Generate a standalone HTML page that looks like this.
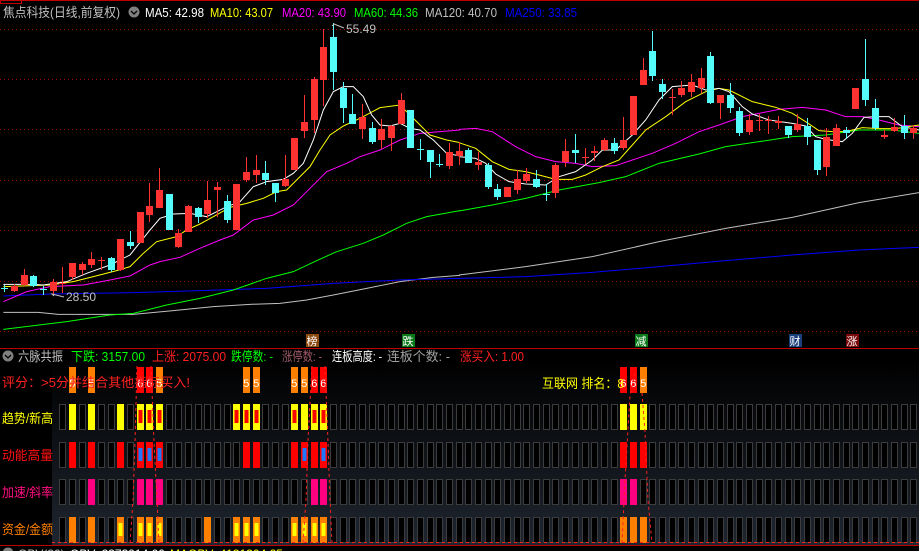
<!DOCTYPE html>
<html><head><meta charset="utf-8">
<style>
html,body{margin:0;padding:0;background:#000;width:919px;height:551px;overflow:hidden}
svg{display:block}
text{font-family:"Liberation Sans","Noto Sans CJK SC",sans-serif}
</style></head><body>
<svg id="s" width="919" height="551" xmlns="http://www.w3.org/2000/svg">
<defs>
<linearGradient id="bg" x1="0" y1="0" x2="0" y2="1">
<stop offset="0" stop-color="#000"/><stop offset="1" stop-color="#1f2630"/>
</linearGradient>
</defs>
<rect width="919" height="551" fill="#000"/>
<rect x="52" y="360" width="867" height="185" fill="url(#bg)"/>
<line x1="0" y1="0.5" x2="919" y2="0.5" stroke="#c00000"/>
<rect x="0.5" y="0.5" width="21" height="3" fill="none" stroke="#c00000"/>
<g stroke="#a00000" stroke-dasharray="1,3" stroke-width="1">
<line x1="0" y1="29.5" x2="919" y2="29.5"/><line x1="0" y1="79.5" x2="919" y2="79.5"/>
<line x1="0" y1="129.5" x2="919" y2="129.5"/><line x1="0" y1="180.5" x2="919" y2="180.5"/>
<line x1="0" y1="230.5" x2="919" y2="230.5"/><line x1="0" y1="281.5" x2="919" y2="281.5"/>
<line x1="0" y1="331.5" x2="919" y2="331.5"/>
</g>
<g id="ma" fill="none" stroke-width="1">
<g transform="translate(0,20) scale(0.33333)">
<polyline vector-effect="non-scaling-stroke" stroke="#c0c0c0" points="10,877 115,877 175,883 400,883 520,872 640,860 750,853 840,850 920,840 1000,825 1100,805 1200,785 1300,772 1380,766"/>
<polyline vector-effect="non-scaling-stroke" stroke="#0000ff" points="10,828 150,822 400,818 600,812 800,805 1000,790 1200,780 1380,775"/>
<polyline vector-effect="non-scaling-stroke" stroke="#00ff00" points="10,928 200,905 330,885 400,880 500,855 600,835 700,810 800,775 880,755 950,722 1010,695 1090,670 1150,645 1220,610 1280,590 1380,572"/>
<polyline vector-effect="non-scaling-stroke" stroke="#ff00ff" points="10,845 80,815 150,800 250,795 330,780 390,768 450,735 480,725 540,712 600,685 660,660 700,645 760,600 820,585 880,555 930,505 980,455 1040,430 1080,410 1140,390 1200,360 1260,340 1320,335 1380,330"/>
<polyline vector-effect="non-scaling-stroke" stroke="#ffff00" points="10,800 150,795 220,785 280,770 350,752 390,740 430,700 470,665 530,650 560,630 600,612 640,590 690,562 740,550 790,535 830,515 860,510 890,480 930,440 960,390 990,345 1030,318 1080,295 1140,263 1200,255 1250,305 1290,345 1340,360 1380,368"/>
<polyline vector-effect="non-scaling-stroke" stroke="#ffffff" points="10,793 100,793 130,795 200,785 260,760 330,735 390,705 450,630 480,595 520,582 570,580 620,590 680,560 720,545 760,500 800,485 850,478 880,460 910,430 940,360 970,270 1000,215 1030,200 1060,200 1090,230 1115,285 1140,315 1170,318 1200,310 1230,325 1260,330 1300,360 1340,400 1380,408"/>
</g>
<g transform="translate(459,20) scale(0.33333)">
<polyline vector-effect="non-scaling-stroke" stroke="#c0c0c0" points="0,765 200,740 400,710 600,665 800,625 1000,592 1200,548 1380,518"/>
<polyline vector-effect="non-scaling-stroke" stroke="#0000ff" points="0,775 200,770 400,757 600,740 800,722 1000,705 1200,690 1380,682"/>
<polyline vector-effect="non-scaling-stroke" stroke="#00ff00" points="0,573 100,555 200,535 300,510 420,488 500,470 600,430 720,402 800,380 900,365 1000,350 1100,345 1200,330 1300,330 1380,340"/>
<polyline vector-effect="non-scaling-stroke" stroke="#ff00ff" points="0,328 50,325 100,335 170,380 230,410 290,425 350,430 400,440 470,437 520,420 580,400 650,370 720,335 780,315 850,290 900,280 960,268 1030,262 1100,270 1160,290 1210,290 1260,300 1320,315 1380,320"/>
<polyline vector-effect="non-scaling-stroke" stroke="#ffff00" points="0,368 50,385 100,425 150,448 200,455 240,465 290,478 340,478 380,465 430,440 480,420 520,375 560,330 620,290 680,245 740,215 780,205 810,210 880,245 950,262 1000,280 1040,305 1080,332 1120,335 1160,335 1210,323 1260,326 1310,326 1380,315"/>
<polyline vector-effect="non-scaling-stroke" stroke="#ffffff" points="0,410 50,415 80,430 110,462 150,485 200,492 260,495 300,470 350,455 400,420 430,390 470,390 520,345 560,300 600,240 640,200 700,195 740,210 780,205 810,215 850,260 880,282 930,300 1000,310 1040,318 1070,350 1100,358 1150,365 1180,340 1215,292 1250,290 1290,290 1330,320 1380,330"/>
</g>
</g>
<g id="candles"></g>
<text x="346" y="33" font-size="12" fill="#c0c0c0">55.49</text>
<polyline points="332,26 334,24 344,28" fill="none" stroke="#c0c0c0"/>
<text x="66" y="301" font-size="12" fill="#c0c0c0">28.50</text>
<polyline points="54,296 52,294 64,297" fill="none" stroke="#c0c0c0"/>

<g font-size="13">
<text x="3" y="17" fill="#c0c0c0" textLength="117" lengthAdjust="spacingAndGlyphs">焦点科技(日线,前复权)</text>
<text x="145" y="17" fill="#fff" textLength="59" lengthAdjust="spacingAndGlyphs">MA5: 42.98</text>
<text x="210" y="17" fill="#ffff00" textLength="63" lengthAdjust="spacingAndGlyphs">MA10: 43.07</text>
<text x="282" y="17" fill="#ff00ff" textLength="64" lengthAdjust="spacingAndGlyphs">MA20: 43.90</text>
<text x="354" y="17" fill="#00ff00" textLength="64" lengthAdjust="spacingAndGlyphs">MA60: 44.36</text>
<text x="425" y="17" fill="#c0c0c0" textLength="72" lengthAdjust="spacingAndGlyphs">MA120: 40.70</text>
<text x="505" y="17" fill="#0000ff" textLength="72" lengthAdjust="spacingAndGlyphs">MA250: 33.85</text>
</g>
<circle cx="134" cy="12" r="5.5" fill="#808080"/>
<polyline points="131,11 134,14 137,11" fill="none" stroke="#000" stroke-width="1.3"/>

<g font-size="11" fill="#fff">
<rect x="306" y="334" width="13" height="13" fill="#8b4a10"/><text x="306.5" y="345">榜</text>
<rect x="402" y="334" width="13" height="13" fill="#0a7a1a"/><text x="402.5" y="345">跌</text>
<rect x="635" y="334" width="13" height="13" fill="#0a7a1a"/><text x="635.5" y="345">减</text>
<rect x="789" y="334" width="13" height="13" fill="#1a3f7a"/><text x="789.5" y="345">财</text>
<rect x="846" y="334" width="13" height="13" fill="#7a0a0a"/><text x="846.5" y="345">涨</text>
</g>
<line x1="0" y1="348.5" x2="919" y2="348.5" stroke="#c00000"/>

<circle cx="8" cy="356" r="5.5" fill="#808080"/>
<polyline points="5,355 8,358 11,355" fill="none" stroke="#000" stroke-width="1.3"/>
<g font-size="13">
<text x="18" y="361" fill="#c0c0c0" textLength="45" lengthAdjust="spacingAndGlyphs">六脉共振</text>
<text x="71" y="361" fill="#00ff00" textLength="74" lengthAdjust="spacingAndGlyphs">下跌: 3157.00</text>
<text x="152" y="361" fill="#ff2020" textLength="74" lengthAdjust="spacingAndGlyphs">上涨: 2075.00</text>
<text x="231" y="361" fill="#00ff00" textLength="42" lengthAdjust="spacingAndGlyphs">跌停数: -</text>
<text x="282" y="361" fill="#a05a6a" textLength="40" lengthAdjust="spacingAndGlyphs">涨停数: -</text>
<text x="332" y="361" fill="#fff" textLength="50" lengthAdjust="spacingAndGlyphs">连板高度: -</text>
<text x="387" y="361" fill="#a0a0a0" textLength="63" lengthAdjust="spacingAndGlyphs">连板个数: -</text>
<text x="460" y="361" fill="#ff2020" textLength="64" lengthAdjust="spacingAndGlyphs">涨买入: 1.00</text>
</g>

<g id="grid"></g>
<g id="score"></g>
<text x="2" y="387" font-size="13" fill="#ff2020" textLength="188" lengthAdjust="spacingAndGlyphs">评分：&gt;5分并结合其他指标买入!</text>
<text x="542" y="388" font-size="13" fill="#ffff00" textLength="82" lengthAdjust="spacingAndGlyphs">互联网 排名：8</text>

<g font-size="13">
<text x="2" y="423" fill="#ffff00" textLength="51" lengthAdjust="spacingAndGlyphs">趋势/新高</text>
<text x="2" y="460" fill="#ff1010" textLength="51" lengthAdjust="spacingAndGlyphs">动能高量</text>
<text x="2" y="497" fill="#ff1080" textLength="51" lengthAdjust="spacingAndGlyphs">加速/斜率</text>
<text x="2" y="534" fill="#ff8000" textLength="51" lengthAdjust="spacingAndGlyphs">资金/金额</text>
</g>
<g fill="none" stroke="#ff2020" stroke-dasharray="3,3">
<polyline points="137,366 135,442 133,500 130,543"/>
<polyline points="151,366 154,442 157,500 159,543"/>
<polyline points="312,366 308,440 306,500 303,543"/>
<polyline points="325,366 328,442 330,500 332,543"/>
<polyline points="635,373 630,395 625,480 622,543"/>
<polyline points="642,393 645,432 648,500 652,543"/>
<line x1="52" y1="542.5" x2="919" y2="542.5"/>
</g>
<line x1="0" y1="545.5" x2="919" y2="545.5" stroke="#c00000"/>
<g font-size="12">
<circle cx="8" cy="553" r="5.5" fill="#808080"/>
<text x="18" y="558" fill="#c0c0c0">OBV(30)</text>
<text x="70" y="558" fill="#fff">OBV: 2373914.00</text>
<text x="170" y="558" fill="#ffff00">MAOBV: 4131304.25</text>
</g>
</svg>
<script>
var NS="http://www.w3.org/2000/svg";
function el(p,t,a){var e=document.createElementNS(NS,t);for(var k in a)e.setAttribute(k,a[k]);p.appendChild(e);return e;}
var D=[[0,288,288,285,292,'c'],[1,286,291,284,292,'r'],[2,275,285,269,286,'r'],[3,276,286,275,287,'c'],[4,289,289,286,295,'c'],[5,282,291,279,295,'r'],[6,283,283,267,293,'r'],[7,263,277,263,280,'r'],[8,264,270,262,275,'r'],[9,259,265,252,268,'r'],[10,260,260,257,270,'r'],[11,258,270,257,272,'c'],[12,239,270,239,271,'r'],[13,242,246,231,249,'c'],[14,212,243,212,243,'r'],[15,206,215,183,222,'r'],[16,190,208,168,208,'r'],[17,194,230,194,230,'c'],[18,233,247,229,248,'r'],[19,206,232,205,232,'r'],[20,208,217,207,223,'c'],[21,200,214,181,218,'r'],[22,187,190,182,217,'r'],[23,201,220,195,223,'c'],[24,184,230,184,230,'r'],[25,172,180,157,182,'r'],[26,170,175,155,183,'r'],[27,173,180,161,185,'c'],[28,183,193,183,202,'c'],[29,179,186,155,187,'r'],[30,138,170,138,170,'r'],[31,122,131,95,138,'r'],[32,79,120,77,133,'r'],[33,47,80,29,106,'r'],[34,37,72,23,90,'c'],[35,88,108,82,123,'c'],[36,114,124,94,124,'c'],[37,117,129,104,139,'r'],[38,128,142,122,144,'c'],[39,129,140,119,149,'r'],[40,126,138,125,151,'r'],[41,100,124,93,124,'r'],[42,110,148,110,148,'c'],[43,149,149,139,160,'c'],[44,150,162,150,178,'c'],[45,164,164,154,167,'c'],[46,152,166,143,169,'r'],[47,151,156,142,165,'r'],[48,150,163,148,163,'c'],[49,162,165,152,170,'r'],[50,165,187,163,189,'c'],[51,189,197,184,200,'c'],[52,187,197,187,197,'r'],[53,179,190,170,194,'r'],[54,174,181,168,183,'r'],[55,179,187,170,188,'c'],[56,194,194,184,201,'c'],[57,165,193,163,198,'r'],[58,151,162,139,167,'r'],[59,150,153,134,163,'c'],[60,157,157,148,164,'r'],[61,151,153,146,161,'r'],[62,140,150,138,151,'r'],[63,143,151,138,154,'c'],[64,140,148,117,150,'r'],[65,96,135,96,135,'r'],[66,70,85,58,85,'r'],[67,51,76,31,81,'c'],[68,84,92,79,99,'c'],[69,97,97,89,115,'r'],[70,88,95,81,97,'r'],[71,82,92,74,97,'r'],[72,78,88,68,93,'r'],[73,56,103,52,104,'c'],[74,95,103,95,119,'r'],[75,95,108,83,113,'c'],[76,111,133,107,136,'c'],[77,120,132,114,135,'r'],[78,120,120,114,131,'r'],[79,120,120,116,134,'r'],[80,121,123,116,129,'r'],[81,126,135,126,138,'c'],[82,124,130,114,132,'r'],[83,126,137,118,145,'c'],[84,140,170,140,175,'c'],[85,137,167,128,176,'r'],[86,128,146,124,146,'r'],[87,130,133,127,139,'c'],[88,88,109,88,109,'r'],[89,79,100,39,106,'c'],[90,108,128,99,130,'c'],[91,135,137,130,139,'r'],[92,127,131,118,132,'r'],[93,126,133,115,139,'c'],[94,128,133,125,139,'r'],[95,128,135,125,140,'c']];
function X(i){return 4.3+9.67*i;}
var cg=document.getElementById('candles');
D.forEach(function(d){var x=Math.round(X(d[0])),col=d[5]=='r'?'#ff3232':'#54fcfc';
el(cg,'rect',{x:x,y:d[3],width:1,height:d[4]-d[3],fill:col});
var h=Math.max(1,d[2]-d[1]);el(cg,'rect',{x:x-3,y:d[1],width:7,height:h,fill:col});});
var rows=[404,442,479,517],H=26;
var fill={0:{7:'y',9:'y',12:'y',14:'yr',15:'yr',16:'yr',24:'yr',25:'yr',26:'yr',30:'yr',31:'y',32:'yr',33:'yr',64:'y',65:'y',66:'y'},
1:{7:'r',9:'r',12:'r',14:'rb',15:'rb',16:'rb',25:'r',26:'r',30:'r',31:'rb',32:'r',33:'rb',64:'r',65:'r',66:'r'},
2:{9:'p',14:'p',15:'p',16:'p',32:'p',33:'p',64:'p',65:'p'},
3:{7:'o',9:'o',12:'oy',14:'oy',15:'oy',16:'oy',21:'o',24:'oy',25:'oy',26:'oy',30:'oy',31:'oy',32:'oy',33:'oy',64:'o',65:'o',66:'o'}};
var C={y:'#ffff00',r:'#ff0000',p:'#ff0080',o:'#ff8000',b:'#1e78ff'};
var gg=document.getElementById('grid');
rows.forEach(function(y,r){for(var i=6;i<=94;i++){var x=Math.round(X(i))-3,f=fill[r][i];
if(!f){el(gg,'rect',{x:x+0.5,y:y+0.5,width:6,height:H-1,fill:'#000',stroke:'#3c3c3c'});}
else{el(gg,'rect',{x:x,y:y,width:7,height:H,fill:C[f[0]]});
if(f[1])el(gg,'rect',{x:x+1.5,y:y+6,width:4,height:13,fill:C[f[1]]});}}});
var sg=document.getElementById('score');
[[7,'o'],[9,'o'],[14,'r'],[15,'r'],[16,'o'],[25,'o'],[26,'o'],[30,'o'],[31,'o'],[32,'r'],[33,'r'],[64,'r'],[65,'r'],[66,'o']].forEach(function(s){
var x=Math.round(X(s[0]))-3;el(sg,'rect',{x:x,y:367,width:7,height:26,fill:s[1]=='r'?'#ff0000':'#ff8000'});
var t=el(sg,'text',{x:x+0.3,y:387,'font-size':11,fill:'#fff'});t.textContent=s[1]=='r'?'6':'5';});
</script>
</body></html>
